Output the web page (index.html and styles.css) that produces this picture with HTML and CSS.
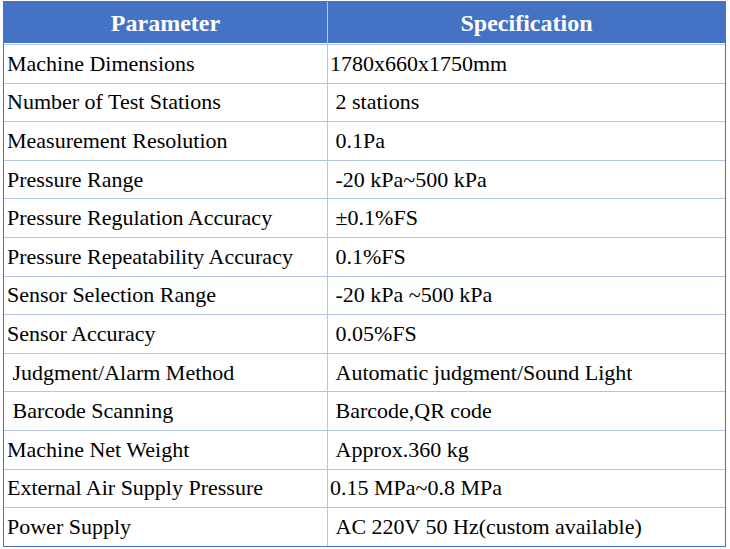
FILE: index.html
```html
<!DOCTYPE html>
<html lang="en">
<head>
<meta charset="utf-8">
<title>Specification</title>
<link rel="stylesheet" href="styles.css">
</head>
<body>
<table class="spec">
  <thead>
    <tr><th class="c1">Parameter</th><th class="c2">Specification</th></tr>
  </thead>
  <tbody>
    <tr><td class="c1">Machine Dimensions</td><td class="c2">1780x660x1750mm</td></tr>
    <tr><td class="c1">Number of Test Stations</td><td class="c2">&nbsp;2 stations</td></tr>
    <tr><td class="c1">Measurement Resolution</td><td class="c2">&nbsp;0.1Pa</td></tr>
    <tr><td class="c1">Pressure Range</td><td class="c2">&nbsp;-20 kPa~500 kPa</td></tr>
    <tr><td class="c1">Pressure Regulation Accuracy</td><td class="c2">&nbsp;±0.1%FS</td></tr>
    <tr><td class="c1">Pressure Repeatability Accuracy</td><td class="c2">&nbsp;0.1%FS</td></tr>
    <tr><td class="c1">Sensor Selection Range</td><td class="c2">&nbsp;-20 kPa ~500 kPa</td></tr>
    <tr><td class="c1">Sensor Accuracy</td><td class="c2">&nbsp;0.05%FS</td></tr>
    <tr><td class="c1">&nbsp;Judgment/Alarm Method</td><td class="c2">&nbsp;Automatic judgment/Sound Light</td></tr>
    <tr><td class="c1">&nbsp;Barcode Scanning</td><td class="c2">&nbsp;Barcode,QR code</td></tr>
    <tr><td class="c1">Machine Net Weight</td><td class="c2">&nbsp;Approx.360 kg</td></tr>
    <tr><td class="c1">External Air Supply Pressure</td><td class="c2">0.15 MPa~0.8 MPa</td></tr>
    <tr class="last"><td class="c1">Power Supply</td><td class="c2">&nbsp;AC 220V 50 Hz(custom available)</td></tr>
  </tbody>
</table>
</body>
</html>
```
FILE: styles.css
```css
html, body {
  margin: 0;
  padding: 0;
  background: #ffffff;
}

.spec {
  margin: 1px 0 0 3px;
  border-collapse: separate;
  border-spacing: 0;
  border: 1px solid #4472c4;
  width: 723px;
  table-layout: fixed;
  font-family: "Liberation Serif", "Times New Roman", serif;
  color: #000000;
}

.spec th,
.spec td {
  padding: 0;
  margin: 0;
  white-space: pre;
  overflow: hidden;
  box-sizing: border-box;
}

.spec .c1 {
  width: 324px;
  border-right: 1px solid #b4c6e7;
}

.spec .c2 {
  width: 397px;
}

.spec th {
  height: 43px;
  background: #4472c4;
  color: #ffffff;
  font-size: 24px;
  font-weight: bold;
  text-align: center;
  vertical-align: middle;
  line-height: 26px;
  padding-bottom: 1px;
  border-bottom: 1px solid #b4c6e7;
  box-shadow: inset 0 -1px 0 #ffffff;
}

.spec td {
  height: 38.6px;
  font-size: 22px;
  line-height: 25px;
  vertical-align: middle;
  text-align: left;
  border-bottom: 1px solid #b4c6e7;
  padding-bottom: 1px;
}

.spec td.c1 {
  padding-left: 3px;
}

.spec td.c2 {
  padding-left: 2px;
}

.spec tr.last td {
  border-bottom: none;
  height: 37.6px;
}
```
